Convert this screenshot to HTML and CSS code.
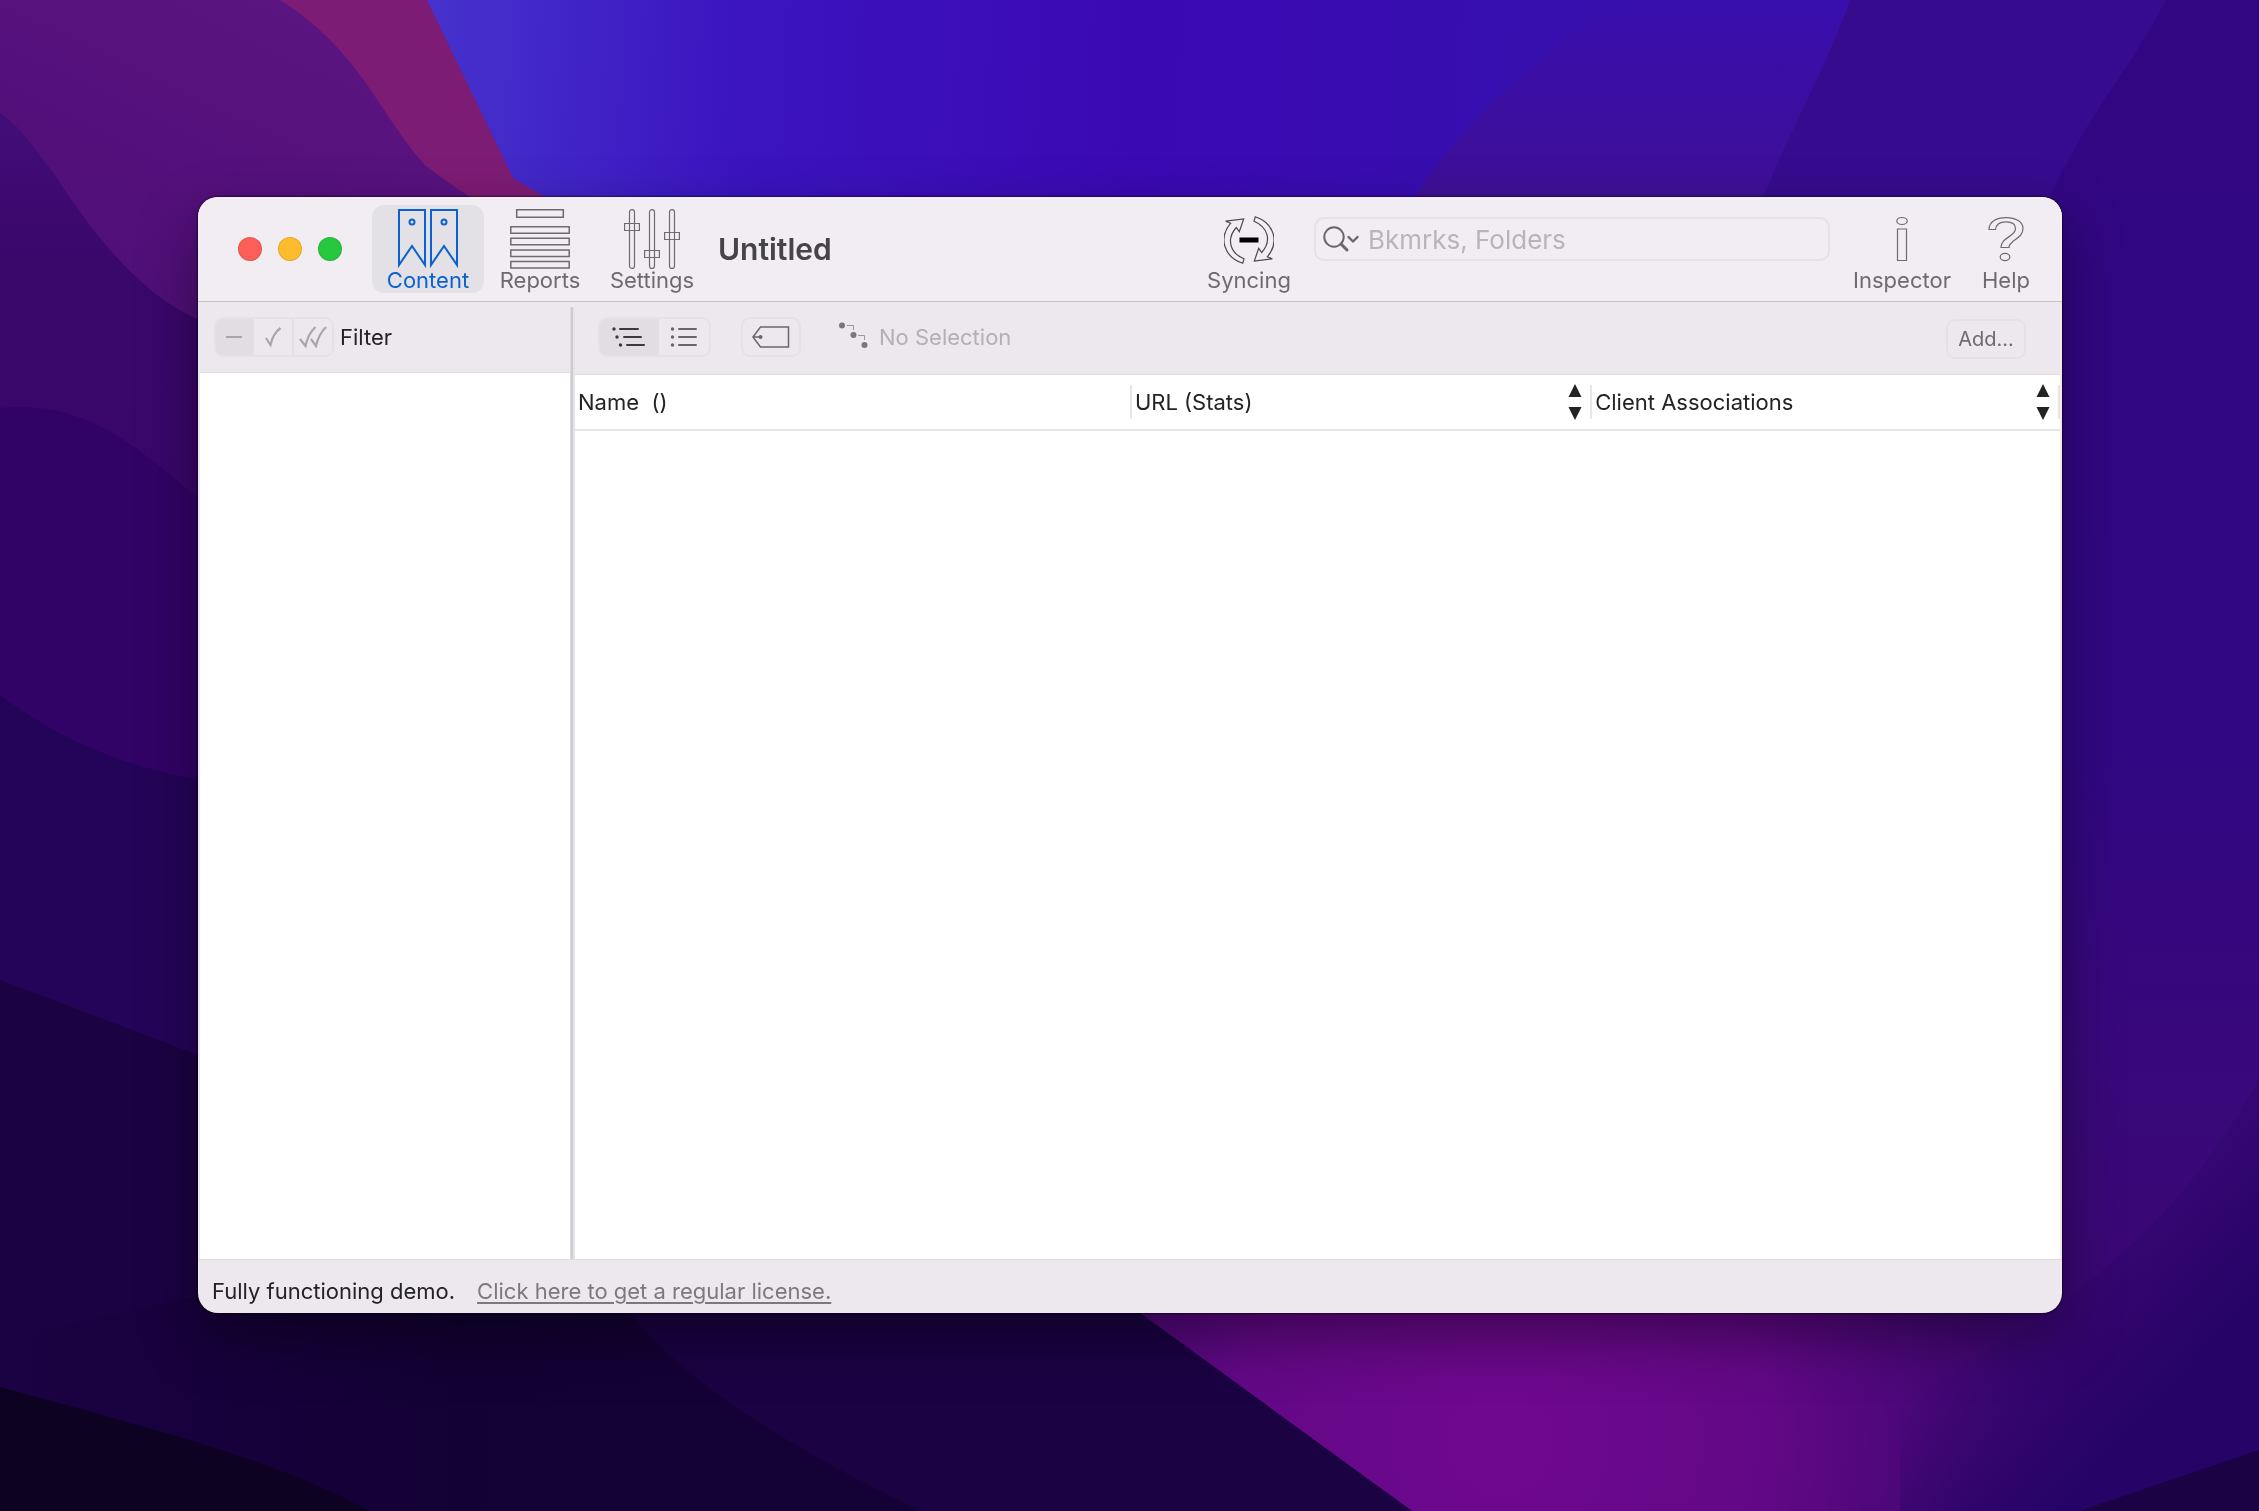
FILE: index.html
```html
<!DOCTYPE html>
<html lang="en">
<head>
<meta charset="utf-8">
<title>Untitled</title>
<link rel="stylesheet" href="styles.css">
</head>
<body>
<svg class="wallpaper" viewBox="0 0 2259 1511" preserveAspectRatio="none" aria-hidden="true">
  <defs>
    <linearGradient id="blue" x1="427" y1="60" x2="1850" y2="140" gradientUnits="userSpaceOnUse">
      <stop offset="0" stop-color="#4632cd"/><stop offset=".22" stop-color="#3b14c0"/><stop offset=".5" stop-color="#3b09b3"/><stop offset=".8" stop-color="#360fae"/><stop offset="1" stop-color="#3c0fa3"/>
    </linearGradient>
    <linearGradient id="fold" x1="0" y1="0" x2="0" y2="1"><stop offset="0" stop-color="#380eae"/><stop offset="1" stop-color="#3f0f96"/></linearGradient>
    <linearGradient id="purple" x1="1" y1="0" x2=".5" y2="1"><stop offset="0" stop-color="#601884"/><stop offset=".5" stop-color="#54107c"/><stop offset="1" stop-color="#480f72"/></linearGradient>
    <linearGradient id="violet" x1="0" y1="0" x2="0" y2="1"><stop offset="0" stop-color="#420d78"/><stop offset=".2" stop-color="#3a076b"/><stop offset="1" stop-color="#380669"/></linearGradient>
    <linearGradient id="right" x1="0" y1="0" x2="0" y2="1"><stop offset="0" stop-color="#320682"/><stop offset=".5" stop-color="#310783"/><stop offset=".72" stop-color="#39087a"/><stop offset="1" stop-color="#3c066e"/></linearGradient>
    <radialGradient id="glow" cx="1500" cy="1440" r="600" gradientUnits="userSpaceOnUse">
      <stop offset="0" stop-color="#70088f"/><stop offset=".45" stop-color="#620886"/><stop offset=".8" stop-color="#440774" stop-opacity=".8"/><stop offset="1" stop-color="#39087a" stop-opacity="0"/>
    </radialGradient>
    <linearGradient id="corner" x1="2060" y1="1230" x2="2200" y2="1360" gradientUnits="userSpaceOnUse"><stop offset="0" stop-color="#2a0467" stop-opacity="0"/><stop offset="1" stop-color="#250367"/></linearGradient>
  </defs>
  <rect width="2259" height="1511" fill="url(#right)"/>
  <path d="M400 0H2166C2130 70 2090 110 2050 197L2000 400H400Z" fill="#370b8e"/>
  <path d="M400 0H1850C1820 80 1790 130 1763 197L1700 400H400Z" fill="url(#blue)"/>
  <path d="M1850 0C1820 80 1790 130 1763 197H1415C1470 110 1540 60 1590 20Q1620 8 1700 0Z" fill="url(#fold)"/>
  <path d="M260 0H427L513 178L600 230L300 200Z" fill="#7d1c75"/>
  <path d="M0 0H280C360 50 380 115 425 165C470 200 510 220 550 250L620 300V600H0Z" fill="url(#purple)" class="sheet"/>
  <path d="M0 113C20 125 35 150 53 172C90 230 140 295 198 319L500 500V900H0Z" fill="url(#violet)"/>
  <path d="M0 408C80 400 130 440 198 498L500 700V1100H0Z" fill="#310366"/>
  <path d="M0 695C60 740 120 765 198 780L500 900V1300H0Z" fill="#240458"/>
  <path d="M1100 1270L1140 1313L1412 1511H2259V900H1100Z" fill="url(#glow)"/>
  <path d="M2259 1080C2190 1200 2110 1290 1900 1400V1511H2259Z" fill="url(#corner)"/>
  <path d="M2080 1511L2259 1450V1511Z" fill="#1a0244"/>
  <path d="M0 980L198 1055L1080 1270L1140 1313L1412 1511H0Z" fill="#1b0243"/>
  <path d="M0 1387C120 1420 280 1460 370 1511H920C820 1460 700 1400 630 1313L400 1250L0 1340Z" fill="url(#floor)"/>
  <defs>
    <linearGradient id="floor" x1="0" y1="0" x2="920" y2="0" gradientUnits="userSpaceOnUse"><stop offset="0" stop-color="#1b0243"/><stop offset=".5" stop-color="#130034"/><stop offset="1" stop-color="#140237"/></linearGradient>
  </defs>
  <path d="M0 1387C120 1420 280 1460 370 1511H0Z" fill="#0d0222"/>
</svg>

<main class="window">
  <header class="toolbar">
    <div class="lights">
      <button class="light close" aria-label="Close"></button>
      <button class="light minimize" aria-label="Minimize"></button>
      <button class="light zoom" aria-label="Zoom"></button>
    </div>
    <nav class="tabs">
      <button class="tool active" aria-pressed="true">
        <svg width="60" height="60" viewBox="0 0 60 60" fill="none" stroke="currentColor" stroke-width="2">
          <path d="M1 1H27V56L14 37L1 56Z"/><circle cx="14" cy="13" r="2.5"/>
          <path d="M33 1H59V56L46 37L33 56Z"/><circle cx="46" cy="13" r="2.5"/>
        </svg>
        <span>Content</span>
      </button>
      <button class="tool">
        <svg width="60" height="60" viewBox="0 0 60 60" fill="none" stroke="currentColor" stroke-width="1.5">
          <path d="M6.7 .8H53.3V8.2H6.7ZM.8 17.8H59.2V24.2H.8ZM.8 29.3H59.2V35.7H.8ZM.8 41H59.2V47.4H.8ZM.8 52.5H59.2V58.9H.8Z"/>
        </svg>
        <span>Reports</span>
      </button>
      <button class="tool">
        <svg width="56" height="60" viewBox="0 0 56 60" fill="none" stroke="currentColor" stroke-width="1.2">
          <rect x="5.5" y=".6" width="5" height="58.8" rx="2.5"/><rect x="25.5" y=".6" width="5" height="58.8" rx="2.5"/><rect x="45.5" y=".6" width="5" height="58.8" rx="2.5"/>
          <path d="M.6 14.5H15.4V21.5H.6ZM20.6 41.5H35.4V48.5H20.6ZM40.6 23.5H55.4V30.5H40.6Z"/>
        </svg>
        <span>Settings</span>
      </button>
    </nav>
    <h1 class="title">Untitled</h1>
    <button class="tool sync">
      <svg width="50" height="60" viewBox="0 -7 50 60" fill="none" stroke="#4a474d" stroke-width="1.2">
        <path d="M1.700 5.200L19.700 3L15.300 15.700L12.300 11.500C2 23 6 37 20 42.800L18.700 47.300C0 41-6 22 6.700 7.200Z"/>
        <path d="M48.300 42.800L30.300 45L34.700 32.300L37.700 36.500C48 25 44 11 30 5.200L31.300 .7C50 7 56 26 43.300 40.800Z"/>
        <path d="M15.500 21.500H34.500V26.500H15.500Z" fill="#000" stroke="none"/>
      </svg>
      <span>Syncing</span>
    </button>
    <label class="search">
      <svg width="38" height="28" viewBox="0 0 38 28" fill="none" stroke="#69666c" stroke-linecap="round">
        <circle cx="12" cy="12" r="9.700" stroke-width="2"/><path d="M19 19L25 25" stroke-width="3"/><path d="M26.500 12L31 16.500L35.500 12" stroke-width="2.400" stroke-linejoin="round"/>
      </svg>
      <input type="search" placeholder="Bkmrks, Folders" aria-label="Search bookmarks and folders">
    </label>
    <div class="aids">
      <button class="tool">
        <svg width="14" height="60" viewBox="0 -8 14 60" fill="none" stroke="currentColor" stroke-width="1.2">
          <ellipse cx="7" cy="4" rx="5.200" ry="3.500"/><path d="M2.500 12H11.500V43.500H2.500Z"/>
        </svg>
        <span>Inspector</span>
      </button>
      <button class="tool">
        <svg width="36" height="60" viewBox="0 -8 36 60" fill="none" stroke="currentColor" stroke-width="1.200">
          <path d="M1 12.500C1 5 8 .6 18 .6C28 .6 35 5 35 11.500C35 22 21 23 21 30.500H13C13 20 27.500 20 27.500 11.500C27.500 7.500 24 4.800 18 4.800C11.500 4.800 8 8 7.500 12.500Z"/><ellipse cx="17" cy="40" rx="4.800" ry="3.600"/>
        </svg>
        <span>Help</span>
      </button>
    </div>
  </header>

  <div class="panes">
    <aside class="sidebar">
      <div class="bar filterbar">
        <div class="segments" role="group" aria-label="Filter">
          <button class="on" aria-label="No filter"><svg width="16" height="16" viewBox="0 0 16 16" fill="none" stroke="#a9a6ab" stroke-width="2"><path d="M0 8H16"/></svg></button>
          <button aria-label="Match any"><svg width="18" height="22" viewBox="0 0 18 22" fill="none" stroke="#a9a6ab" stroke-width="2.200"><path d="M2 12L6.500 19C8 12 11 6 16.500 2"/></svg></button>
          <button aria-label="Match all"><svg width="28" height="22" viewBox="0 0 28 22" fill="none" stroke="#a9a6ab" stroke-width="2.200"><path d="M1 13L6.500 20C8 13 11 6 16.500 1M12 13L17 20C18.500 13 22 6 27 1"/></svg></button>
        </div>
        <span class="filter-label">Filter</span>
      </div>
      <div class="list"></div>
    </aside>
    <div class="splitter"></div>
    <section class="content">
      <div class="bar viewbar">
        <div class="segments views" role="group" aria-label="View">
          <button class="on" aria-label="Outline"><svg width="34" height="22" viewBox="0 0 34 22" fill="none" stroke="#3c393f" stroke-width="2" stroke-linecap="round"><path d="M8 3H26M12 11H29M15 19H32"/><path d="M2 3h.01M5 11h.01M8.500 19h.01" stroke-width="3.400"/></svg></button>
          <button aria-label="List"><svg width="28" height="22" viewBox="0 0 28 22" fill="none" stroke="#69666c" stroke-width="2" stroke-linecap="round"><path d="M9 3H26M9 11H26M9 19H26"/><path d="M2.500 3h.01M2.500 11h.01M2.500 19h.01" stroke-width="3.400"/></svg></button>
        </div>
        <button class="push tag" aria-label="Tags"><svg width="38" height="22" viewBox="0 0 38 22" fill="none" stroke="#69666c" stroke-width="1.500"><path d="M1 11L8.500 1H36.500V21H8.500ZM1 11H8"/><circle cx="8.500" cy="11" r="2" fill="#69666c" stroke="none"/></svg></button>
        <div class="path">
          <svg width="30" height="28" viewBox="0 0 30 28" fill="none" stroke="#9a979d" stroke-width="1"><path d="M8 3.500H14.500V8M19 13.500H25.500V18"/><g fill="#79767c" stroke="none"><circle cx="3" cy="3.500" r="3"/><circle cx="14.500" cy="13" r="3"/><circle cx="25.500" cy="23" r="3"/></g></svg>
          <span>No Selection</span>
        </div>
        <button class="push add">Add...</button>
      </div>
      <table class="grid">
        <colgroup><col class="c-name"><col class="c-url"><col class="c-client"></colgroup>
        <thead><tr>
          <th scope="col"><div class="cell"><span>Name&nbsp; ()</span></div></th>
          <th scope="col"><div class="cell"><span>URL (Stats)</span><button class="sort" aria-label="Sort by URL"><svg width="14" height="36" viewBox="0 0 14 36" fill="#232225"><path d="M7 0L13.500 13H.5ZM7 36L13.500 23H.5Z"/></svg></button></div></th>
          <th scope="col"><div class="cell"><span>Client Associations</span><button class="sort" aria-label="Sort by client"><svg width="14" height="36" viewBox="0 0 14 36" fill="#232225"><path d="M7 0L13.500 13H.5ZM7 36L13.500 23H.5Z"/></svg></button></div></th>
        </tr></thead>
      </table>
    </section>
  </div>

  <footer class="status">
    <span>Fully functioning demo.</span>
    <a href="#license">Click here to get a regular license.</a>
  </footer>
</main>
</body>
</html>
```
FILE: styles.css
```css
* { box-sizing: border-box; }

body {
  margin: 0;
  min-height: 100vh;
  display: flex;
  padding: 197px 197px 198px 198px;
  background: #320682;
  font-family: Inter, "Liberation Sans", sans-serif;
  font-size: 22px;
  line-height: 28px;
  color: #232225;
}

button {
  margin: 0;
  padding: 0;
  border: 0;
  background: none;
  font: inherit;
  color: inherit;
}

svg { display: block; flex: none; }

.wallpaper {
  position: fixed;
  inset: 0;
  z-index: -1;
  width: 100%;
  height: 100%;
}

.window {
  flex: 1;
  min-width: 0;
  display: flex;
  flex-direction: column;
  border-radius: 20px;
  overflow: hidden;
  background: #ede8ee;
  box-shadow: 0 0 2px 1px rgba(0, 0, 0, .5), 0 24px 60px rgba(0, 0, 0, .4);
}

/* Toolbar */
.toolbar {
  display: flex;
  align-items: flex-start;
  height: 105px;
  padding: 8px 8px 0 40px;
  background: #f1edf3;
  border-bottom: 1px solid #c5c1c8;
}

.lights { display: flex; gap: 16px; padding-top: 32px; }
.light { width: 24px; height: 24px; border-radius: 50%; border: 1px solid rgba(0, 0, 0, .1); }
.close { background: #fc5f57; }
.minimize { background: #fdbc2e; }
.zoom { background: #27c840; }

.tabs { display: flex; margin-left: 30px; }

.tool {
  display: flex;
  flex-direction: column;
  align-items: center;
  width: 112px;
  height: 88px;
  padding-top: 4px;
  border-radius: 12px;
  color: #6d6a70;
  line-height: 26px;
}
.tool span { margin-top: -2px; }
.tool.active { background: #e4e1e6; color: #0a62d0; }

.title {
  margin: 24px 0 0 10px;
  font-size: 30px;
  line-height: 40px;
  font-weight: 600;
  color: #474449;
}

.sync { margin-left: auto; }

.search {
  display: flex;
  align-items: center;
  width: 516px;
  height: 44px;
  margin: 12px 0 0 9px;
  padding-left: 6px;
  border: 2px solid #e5e1e7;
  border-radius: 10px;
}
.search input {
  flex: 1;
  min-width: 0;
  height: 36px;
  padding: 0;
  margin-left: 8px;
  border: 0;
  outline: 0;
  background: none;
  font: inherit;
  font-size: 26px;
  appearance: none;
}
.search input::placeholder { color: #b8b4ba; opacity: 1; }

.aids { display: flex; margin-left: 16px; }
.aids .tool:last-child { width: 96px; }

/* Panes */
.panes { flex: 1; display: flex; margin: 0 2px; }
.sidebar { width: 370px; display: flex; flex-direction: column; }
.list { flex: 1; background: #fff; border-top: 1px solid #e0dde1; }
.splitter {
  width: 5px;
  margin-top: 5px;
  border-left: 1px solid #dedbdf;
  border-right: 2px solid #e6e3e7;
  background: #cfccd1;
}
.content { flex: 1; min-width: 0; display: flex; flex-direction: column; background: #fff; }

.bar { display: flex; align-items: center; background: #ede8ee; }
.filterbar { height: 70px; padding-left: 14px; }
.viewbar { height: 73px; padding: 0 34px 2px 23px; border-bottom: 1px solid #e2dfe3; }

.segments { display: flex; height: 40px; border: 2px solid #e5e1e6; border-radius: 9px; overflow: hidden; }
.segments button { display: flex; align-items: center; justify-content: center; width: 40px; }
.segments button + button { border-left: 2px solid #e2dee3; }
.segments .on { width: 36px; background: #e1dde2; }
.views button { width: 52px; }
.views .on { width: 57px; }

.filter-label { margin-left: 6px; }

.push {
  display: flex;
  align-items: center;
  justify-content: center;
  height: 40px;
  border: 2px solid #e5e1e6;
  border-radius: 9px;
  color: #6d6a70;
}
.tag { width: 60px; margin-left: 30px; }
.path { display: flex; align-items: center; gap: 10px; margin-left: 38px; color: #b3afb5; }
.path svg { margin-top: -2px; }
.add { width: 80px; margin: 4px 0 0 auto; font-size: 20px; }

/* Table */
.grid { width: 100%; table-layout: fixed; border-collapse: collapse; }
.c-name { width: 37.5%; }
.c-url { width: 31%; }
.grid th { height: 55px; padding: 0; font-weight: 400; text-align: left; border-bottom: 2px solid #e8e6e9; }
.cell { display: flex; align-items: center; justify-content: space-between; height: 34px; padding: 0 8px 0 3px; border-right: 2px solid #e8e6e9; }

/* Status bar */
.status { display: flex; gap: 22px; height: 54px; padding: 17px 14px 0; border-top: 1px solid #dedbdf; }
.status a { color: #7c797e; text-underline-offset: 3px; text-decoration-thickness: 2px; }
```
